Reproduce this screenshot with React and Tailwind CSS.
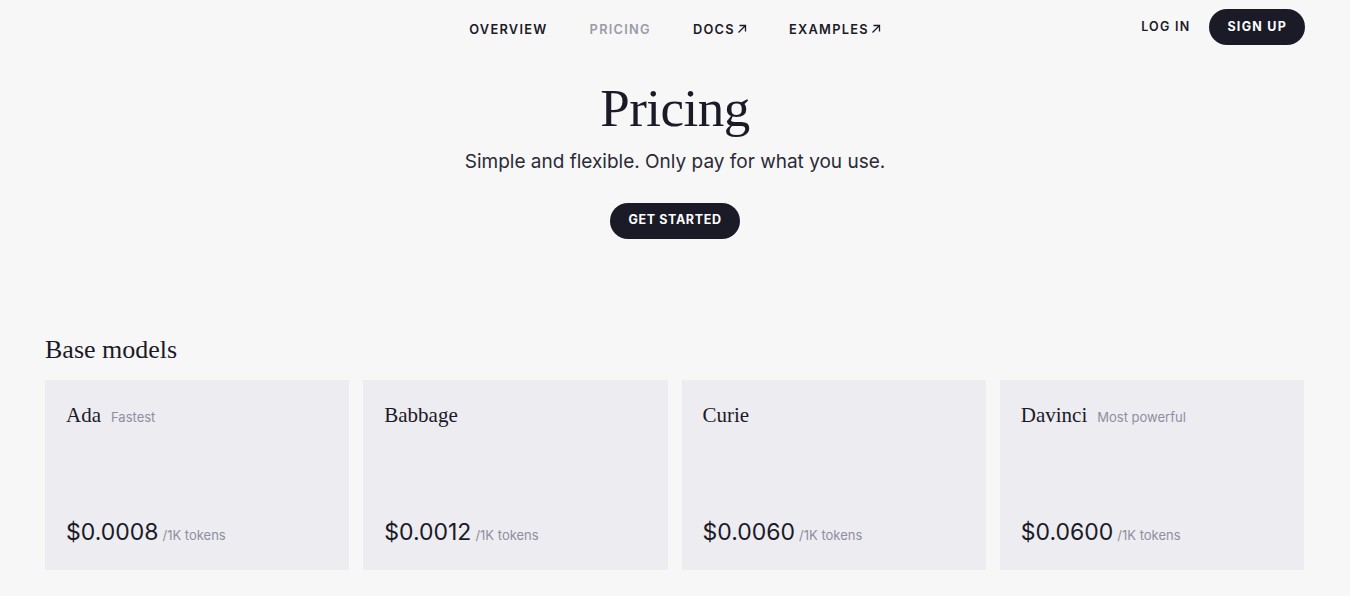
import React from "react";

const serif = { fontFamily: '"Liberation Serif", "DejaVu Serif", serif' };

function Arrow() {
  return (
    <svg width="10" height="10" viewBox="0 0 10 10" className="ml-[2px] mb-[2px] inline-block" fill="none" stroke="currentColor" strokeWidth="1.3">
      <path d="M1.5 8.5 L8.5 1.5 M2.5 1.5 H8.5 V7.5" />
    </svg>
  );
}

const models = [
  { name: "Ada", tag: "Fastest", price: "$0.0008" },
  { name: "Babbage", tag: "", price: "$0.0012" },
  { name: "Curie", tag: "", price: "$0.0060" },
  { name: "Davinci", tag: "Most powerful", price: "$0.0600" },
];

export default function App() {
  return (
    <div className="min-h-[596px] bg-[#f7f7f8] text-[#1b1a27] font-['Inter',sans-serif]">
      <header className="relative h-[58px] px-[45px]">
        <nav className="flex justify-center items-center h-[58px] pt-[2px] gap-[42px] text-[12.8px] font-semibold tracking-[0.1em]">
          <span>OVERVIEW</span>
          <span className="text-[#9b9ba6]">PRICING</span>
          <span className="flex items-center">DOCS<Arrow /></span>
          <span className="flex items-center">EXAMPLES<Arrow /></span>
        </nav>
        <div className="absolute right-[45px] top-[9px] flex items-center gap-[19px] text-[12.5px] font-semibold tracking-[0.1em]">
          <span>LOG IN</span>
          <span className="h-[36px] px-[18px] rounded-full bg-[#1b1a27] text-white flex items-center font-bold">SIGN UP</span>
        </div>
      </header>
      <section className="flex flex-col items-center">
        <h1 style={serif} className="text-[53px] leading-none mt-[24px] tracking-[-0.01em]">Pricing</h1>
        <p className="text-[19px] mt-[13px] text-[#2a2a36]">Simple and flexible. Only pay for what you use.</p>
        <button className="mt-[26px] h-[36px] w-[130px] rounded-full bg-[#1b1a27] text-white text-[12.5px] font-bold tracking-[0.05em]">GET STARTED</button>
      </section>
      <section className="pl-[45px] pr-[46px] mt-[98px]">
        <h2 style={serif} className="text-[26px] leading-none">Base models</h2>
        <div className="grid grid-cols-4 gap-[14px] mt-[17px]">
          {models.map((m) => (
            <div key={m.name} className="h-[190px] bg-[#ececf1] px-[21px] pt-[25px] pb-[24px] flex flex-col justify-between">
              <div className="flex items-baseline gap-[10px]">
                <span style={serif} className="text-[21px] leading-none">{m.name}</span>
                {m.tag && <span className="text-[13px] text-[#8e8ea0]">{m.tag}</span>}
              </div>
              <div className="flex items-baseline gap-[4px]">
                <span className="text-[23px] leading-none">{m.price}</span>
                <span className="text-[13px] text-[#8e8ea0]">/1K tokens</span>
              </div>
            </div>
          ))}
        </div>
      </section>
    </div>
  );
}
